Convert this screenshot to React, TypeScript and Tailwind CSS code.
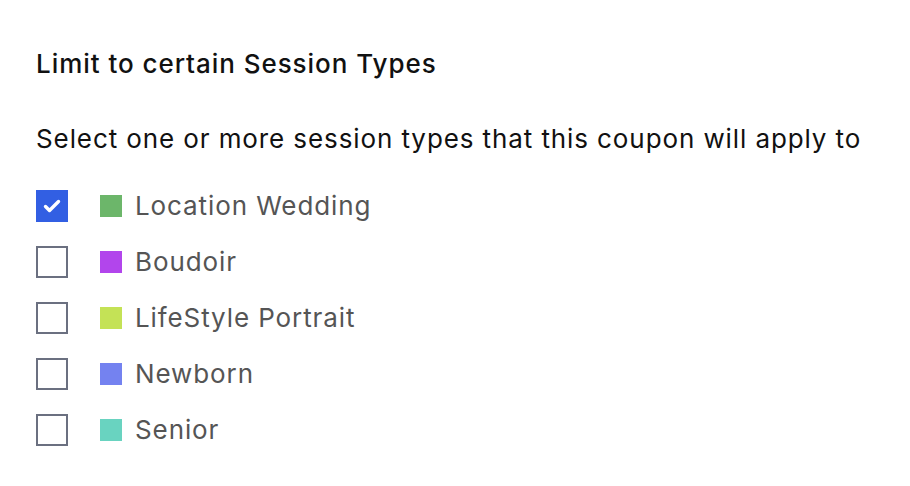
import React, { useState } from 'react';

interface SessionType {
  id: string;
  name: string;
  color: string;
}

const sessionTypes: SessionType[] = [
  { id: 'location-wedding', name: 'Location Wedding', color: 'bg-[#6cb66a]' },
  { id: 'boudoir', name: 'Boudoir', color: 'bg-[#b245ec]' },
  { id: 'lifestyle', name: 'LifeStyle Portrait', color: 'bg-[#c4e256]' },
  { id: 'newborn', name: 'Newborn', color: 'bg-[#7482f0]' },
  { id: 'senior', name: 'Senior', color: 'bg-[#69d3c0]' },
];

export default function App() {
  const [selected, setSelected] = useState<string[]>(['location-wedding']);

  const toggle = (id: string) => {
    setSelected((prev) => (prev.includes(id) ? prev.filter((s) => s !== id) : [...prev, id]));
  };

  return (
    <div className="min-h-screen bg-white px-9 pt-[47px] font-['Inter',sans-serif]">
      <h3 className="text-[26px] leading-[34px] font-medium tracking-[0.95px] text-[#111]">
        Limit to certain Session Types
      </h3>

      <p className="mt-[40px] text-[26px] leading-[36px] tracking-[0.9px] text-[#111]">
        Select one or more session types that this coupon will apply to
      </p>

      <div className="mt-[33px] flex flex-col gap-6">
        {sessionTypes.map((type) => {
          const checked = selected.includes(type.id);
          return (
            <label key={type.id} className="flex h-8 cursor-pointer items-center">
              <button
                type="button"
                onClick={() => toggle(type.id)}
                className={
                  checked
                    ? 'flex h-8 w-8 items-center justify-center bg-[#325fe3]'
                    : 'h-8 w-8 border-2 border-[#6b7080] bg-white'
                }
              >
                {checked && (
                  <svg width="24" height="24" viewBox="0 0 24 24" fill="none">
                    <path d="M5.5 12.5l4 4L18.5 7.5" stroke="white" strokeWidth="3.4" strokeLinecap="round" strokeLinejoin="round" />
                  </svg>
                )}
              </button>
              <span className={`ml-8 h-[22px] w-[22px] ${type.color}`} />
              <span className="ml-[13px] text-[26px] leading-8 tracking-[0.9px] text-[#555]">{type.name}</span>
            </label>
          );
        })}
      </div>
    </div>
  );
}
